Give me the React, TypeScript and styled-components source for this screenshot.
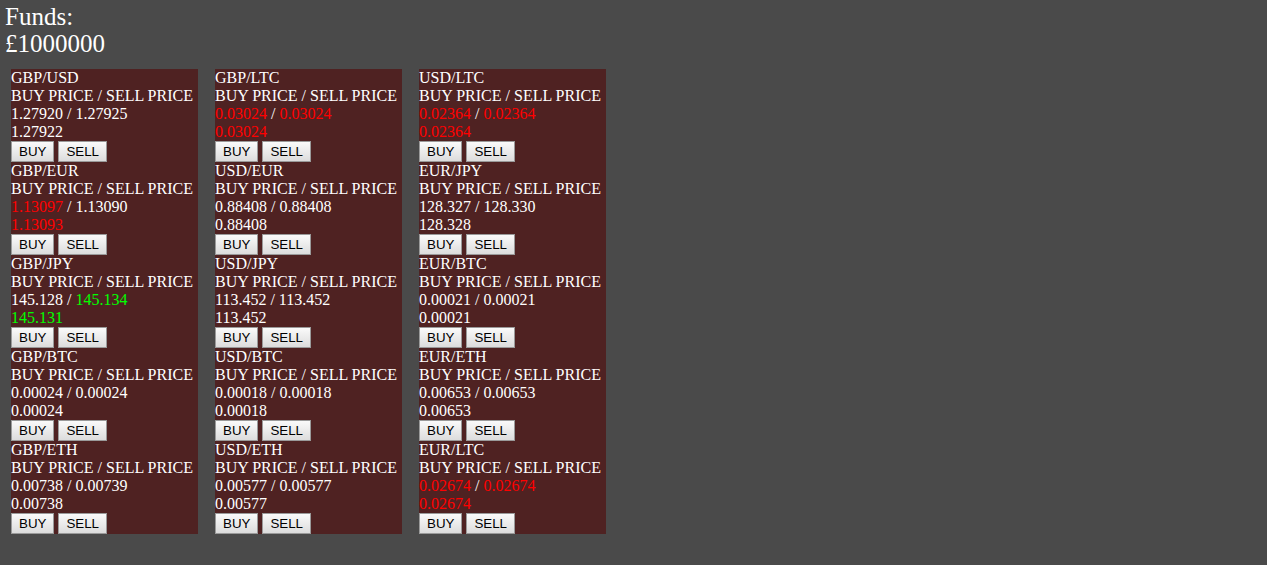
import React from "react";
import styled, { createGlobalStyle } from "styled-components";

const Global = createGlobalStyle`
  html, body { margin: 0; padding: 0; background: #4a4a4a; }
  body { font-family: "Liberation Serif", "Times New Roman", serif; color: #ffffff; }
`;

const Page = styled.div`
  padding: 3px 5px;
  min-height: 565px;
  box-sizing: border-box;
`;

const Funds = styled.div`
  font-size: 25px;
  line-height: 27px;
`;

const Columns = styled.div`
  display: flex;
  align-items: flex-start;
  gap: 17px;
  margin-top: 12px;
  padding-left: 6px;
`;

const Column = styled.div`
  width: 187px;
  background: #4f2222;
  display: flex;
  flex-direction: column;
`;

const Pair = styled.div`
  font-size: 16px;
  line-height: 18px;
  display: flex;
  flex-direction: column;
`;

const Line = styled.div`
  white-space: nowrap;
  height: 18px;
`;

type Tone = "white" | "red" | "green";
const Price = styled.span<{ $tone: Tone }>`
  color: ${(p) => (p.$tone === "red" ? "#ff0000" : p.$tone === "green" ? "#00ff00" : "#ffffff")};
`;

const Buttons = styled.div`
  display: flex;
  gap: 4px;
  height: 21px;
`;

const Btn = styled.button`
  font-family: "Liberation Sans", Arial, sans-serif;
  font-size: 13.333px;
  line-height: 15px;
  height: 21px;
  padding: 2px 7px;
  color: #000;
  background: linear-gradient(#fafafa, #dcdcdc);
  border: 1px solid #9a9a9a;
  border-radius: 0;
  cursor: pointer;
  margin: 0;
`;

type Item = { name: string; buy: string; sell: string; mid: string; bt: Tone; st: Tone; mt: Tone };

const w: Tone = "white";
const r: Tone = "red";
const g: Tone = "green";

const columns: Item[][] = [
  [
    { name: "GBP/USD", buy: "1.27920", sell: "1.27925", mid: "1.27922", bt: w, st: w, mt: w },
    { name: "GBP/EUR", buy: "1.13097", sell: "1.13090", mid: "1.13093", bt: r, st: w, mt: r },
    { name: "GBP/JPY", buy: "145.128", sell: "145.134", mid: "145.131", bt: w, st: g, mt: g },
    { name: "GBP/BTC", buy: "0.00024", sell: "0.00024", mid: "0.00024", bt: w, st: w, mt: w },
    { name: "GBP/ETH", buy: "0.00738", sell: "0.00739", mid: "0.00738", bt: w, st: w, mt: w },
  ],
  [
    { name: "GBP/LTC", buy: "0.03024", sell: "0.03024", mid: "0.03024", bt: r, st: r, mt: r },
    { name: "USD/EUR", buy: "0.88408", sell: "0.88408", mid: "0.88408", bt: w, st: w, mt: w },
    { name: "USD/JPY", buy: "113.452", sell: "113.452", mid: "113.452", bt: w, st: w, mt: w },
    { name: "USD/BTC", buy: "0.00018", sell: "0.00018", mid: "0.00018", bt: w, st: w, mt: w },
    { name: "USD/ETH", buy: "0.00577", sell: "0.00577", mid: "0.00577", bt: w, st: w, mt: w },
  ],
  [
    { name: "USD/LTC", buy: "0.02364", sell: "0.02364", mid: "0.02364", bt: r, st: r, mt: r },
    { name: "EUR/JPY", buy: "128.327", sell: "128.330", mid: "128.328", bt: w, st: w, mt: w },
    { name: "EUR/BTC", buy: "0.00021", sell: "0.00021", mid: "0.00021", bt: w, st: w, mt: w },
    { name: "EUR/ETH", buy: "0.00653", sell: "0.00653", mid: "0.00653", bt: w, st: w, mt: w },
    { name: "EUR/LTC", buy: "0.02674", sell: "0.02674", mid: "0.02674", bt: r, st: r, mt: r },
  ],
];

export default function App() {
  return (
    <Page>
      <Global />
      <Funds>
        <div>Funds:</div>
        <div>£1000000</div>
      </Funds>
      <Columns>
        {columns.map((col, i) => (
          <Column key={i}>
            {col.map((it) => (
              <Pair key={it.name}>
                <Line>{it.name}</Line>
                <Line>BUY PRICE / SELL PRICE</Line>
                <Line>
                  <Price $tone={it.bt}>{it.buy}</Price> / <Price $tone={it.st}>{it.sell}</Price>
                </Line>
                <Line>
                  <Price $tone={it.mt}>{it.mid}</Price>
                </Line>
                <Buttons>
                  <Btn>BUY</Btn>
                  <Btn>SELL</Btn>
                </Buttons>
              </Pair>
            ))}
          </Column>
        ))}
      </Columns>
    </Page>
  );
}
